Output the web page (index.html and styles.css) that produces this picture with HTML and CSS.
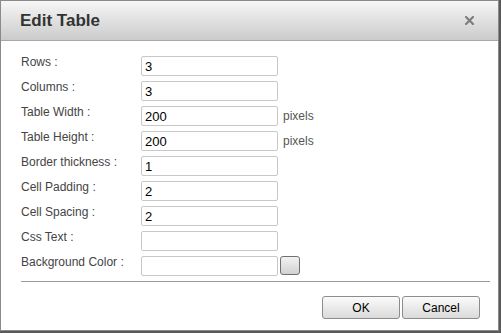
FILE: index.html
```html
<!DOCTYPE html>
<html>
<head>
<meta charset="utf-8">
<link rel="stylesheet" href="styles.css">
</head>
<body>
<div class="dialog">
  <div class="header">
    <span class="title">Edit Table</span>
    <svg class="close" width="9" height="9" viewBox="0 0 9 9"><path d="M1 1L8 8M8 1L1 8" stroke="#7e7e7e" stroke-width="2.2" stroke-linecap="square"/></svg>
  </div>
  <div class="body">
    <div class="row"><label>Rows :</label><input class="field" value="3"></div>
    <div class="row"><label>Columns :</label><input class="field" value="3"></div>
    <div class="row"><label>Table Width :</label><input class="field" value="200"><span class="unit">pixels</span></div>
    <div class="row"><label>Table Height :</label><input class="field" value="200"><span class="unit">pixels</span></div>
    <div class="row"><label>Border thickness :</label><input class="field" value="1"></div>
    <div class="row"><label>Cell Padding :</label><input class="field" value="2"></div>
    <div class="row"><label>Cell Spacing :</label><input class="field" value="2"></div>
    <div class="row"><label>Css Text :</label><input class="field" value=""></div>
    <div class="row"><label>Background Color :</label><input class="field" value=""><span class="swatch"></span></div>
    <div class="sep"></div>
    <div class="actions">
      <button class="btn">OK</button>
      <button class="btn">Cancel</button>
    </div>
  </div>
</div>
</body>
</html>
```
FILE: styles.css
```css
html, body {
  margin: 0;
  padding: 0;
  width: 501px;
  height: 333px;
  overflow: hidden;
  background: #5a5a5a;
  font-family: "Liberation Sans", Arial, sans-serif;
}
.dialog {
  box-sizing: border-box;
  width: 499px;
  height: 331px;
  background: #fff;
  border: 1px solid #8a8a8a;
  display: flex;
  flex-direction: column;
}
.header {
  box-sizing: border-box;
  height: 40px;
  border-bottom: 1px solid #a8a8a8;
  background: linear-gradient(#f6f6f6, #cbcbcb);
  display: flex;
  align-items: center;
  justify-content: space-between;
  padding: 0 24px 0 19px;
}
.title {
  font-size: 17px;
  font-weight: bold;
  color: #333;
}
.close {
  display: block;
}
.body {
  padding: 15px 8px 0 20px;
}
.row {
  display: flex;
  align-items: flex-start;
  height: 20px;
  margin-bottom: 5px;
}
.row label {
  width: 120px;
  font-size: 12px;
  line-height: 12px;
  color: #444;
}
.field {
  box-sizing: border-box;
  width: 137px;
  height: 20px;
  margin: 0;
  border: 1px solid #c8c8c8;
  border-radius: 2px;
  padding: 0 3px;
  font-family: "Liberation Sans", Arial, sans-serif;
  font-size: 13px;
  color: #000;
  outline: none;
}
.unit {
  margin-left: 5px;
  font-size: 12px;
  line-height: 20px;
  color: #555;
}
.swatch {
  box-sizing: border-box;
  width: 20px;
  height: 19px;
  margin-left: 2px;
  border: 1px solid #707070;
  border-radius: 3px;
  background: linear-gradient(#f2f2f2, #d2d2d2);
}
.sep {
  height: 1px;
  background: #9a9a9a;
  margin-top: 2px;
}
.actions {
  display: flex;
  justify-content: flex-end;
  gap: 2px;
  padding: 14px 10px 0 0;
}
.btn {
  box-sizing: border-box;
  width: 78px;
  height: 23px;
  margin: 0;
  padding: 0;
  border: 1px solid #8c8c8c;
  border-radius: 3px;
  background: linear-gradient(#fbfbfb, #dadada);
  font-family: "Liberation Sans", Arial, sans-serif;
  font-size: 12px;
  color: #000;
}
```
